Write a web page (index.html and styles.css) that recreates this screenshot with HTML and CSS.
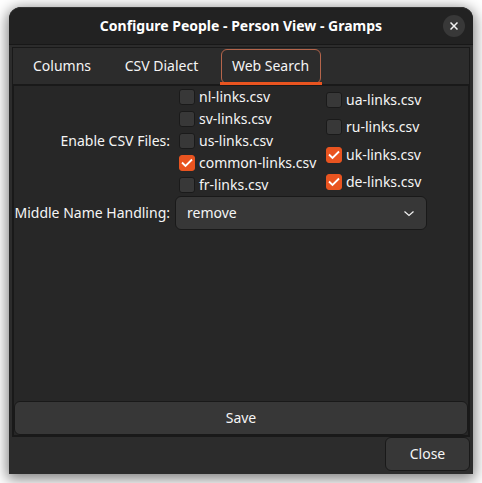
FILE: index.html
```html
<!DOCTYPE html>
<html lang="en">
<head>
<meta charset="utf-8">
<title>Configure People - Person View - Gramps</title>
<link rel="stylesheet" href="styles.css">
</head>
<body>
<main class="window">
  <header class="titlebar">
    <h1 class="title">Configure People - Person View - Gramps</h1>
    <button class="window-close" type="button" aria-label="Close window">
      <svg viewBox="0 0 8 8" width="8" height="8"><path d="M0.5 0.5 7.5 7.5M7.5 0.5 0.5 7.5"/></svg>
    </button>
  </header>
  <section class="notebook">
    <nav class="tabs" role="tablist">
      <button class="tab tab-short" type="button" role="tab">Columns</button>
      <button class="tab" type="button" role="tab">CSV Dialect</button>
      <button class="tab active" type="button" role="tab" aria-selected="true">Web Search</button>
    </nav>
    <form class="page">
      <div class="fields">
        <span class="field-label" id="files-label">Enable CSV Files:</span>
        <div class="files" role="group" aria-labelledby="files-label">
          <div class="file-list">
            <label class="file"><input type="checkbox">nl-links.csv</label>
            <label class="file"><input type="checkbox">sv-links.csv</label>
            <label class="file"><input type="checkbox">us-links.csv</label>
            <label class="file"><input type="checkbox" checked>common-links.csv</label>
            <label class="file"><input type="checkbox">fr-links.csv</label>
          </div>
          <div class="file-list">
            <label class="file"><input type="checkbox">ua-links.csv</label>
            <label class="file"><input type="checkbox">ru-links.csv</label>
            <label class="file"><input type="checkbox" checked>uk-links.csv</label>
            <label class="file"><input type="checkbox" checked>de-links.csv</label>
          </div>
        </div>
        <label class="field-label" for="middle-name">Middle Name Handling:</label>
        <div class="combo">
          <select id="middle-name"><option>remove</option></select>
          <svg class="chevron" viewBox="0 0 12 8" width="12" height="8"><path d="M1.5 1.5 6 5.5 10.5 1.5"/></svg>
        </div>
      </div>
      <button class="button save" type="button">Save</button>
    </form>
  </section>
  <footer class="actions">
    <button class="button close" type="button">Close</button>
  </footer>
</main>
</body>
</html>
```
FILE: styles.css
```css
* {
  box-sizing: border-box;
}

body {
  margin: 0;
  padding: 7px 9px 9px;
  min-height: 100vh;
  display: flex;
  background: #fff;
  color: #f5f5f5;
  font: 14px/22px "Noto Sans", "Open Sans", sans-serif;
}

button,
select {
  font: inherit;
  color: inherit;
}

svg {
  fill: none;
  stroke: #f2f2f2;
}

.window {
  flex: 1;
  display: flex;
  flex-direction: column;
  background: #2c2c2c;
  border-radius: 12px 12px 0 0;
  box-shadow: 0 3px 14px 2px rgba(0, 0, 0, 0.5);
}

.titlebar {
  position: relative;
  height: 38px;
  display: flex;
  align-items: center;
  justify-content: center;
  background: #222;
  border-top: 1px solid #343434;
  border-bottom: 1px solid #181818;
  border-radius: 12px 12px 0 0;
}

.title {
  margin: 0;
  font-size: 14px;
  font-weight: 700;
  color: #fff;
}

.window-close {
  position: absolute;
  right: 8px;
  width: 22px;
  height: 22px;
  padding: 0;
  display: flex;
  align-items: center;
  justify-content: center;
  border: 0;
  border-radius: 50%;
  background: #383838;
}

.window-close svg {
  stroke-width: 1.5;
}

.notebook {
  flex: 1;
  display: flex;
  flex-direction: column;
  margin: 2px 3px 0;
  border: 1px solid #191919;
}

.tabs {
  display: flex;
  gap: 8px;
  height: 38px;
  padding-left: 8px;
  border-bottom: 2px solid #191919;
}

.tab {
  position: relative;
  width: 101px;
  height: 36px;
  padding: 0;
  border: 0;
  background: none;
}

.tab-short {
  width: 82px;
}

.tab.active::before {
  content: "";
  position: absolute;
  inset: 1px 0 0 1px;
  border: 1px solid #b5654b;
  border-radius: 6px;
}

.tab.active::after {
  content: "";
  position: absolute;
  inset: 34px -1px -1px 0;
  background: #e95420;
}

.page {
  flex: 1;
  display: flex;
  flex-direction: column;
  justify-content: space-between;
  background: #272727;
  border: solid #191919;
  border-width: 0 1px 1px;
}

.fields {
  display: grid;
  grid-template-columns: 156px 252px;
  column-gap: 5px;
  align-items: center;
}

.field-label {
  text-align: right;
  white-space: nowrap;
}

.files {
  display: flex;
  height: 110px;
  padding-left: 4px;
}

.file-list {
  display: flex;
  flex-direction: column;
  width: 147px;
  flex-shrink: 0;
}

.file-list:last-child {
  width: 100px;
}

.file {
  flex: 1;
  display: flex;
  align-items: center;
  gap: 4px;
  white-space: nowrap;
}

.file input {
  appearance: none;
  width: 16px;
  height: 16px;
  margin: 0;
  border: 1px solid #1a1a1a;
  border-radius: 3px;
  background: #383838;
}

.file input:checked {
  border-color: #e95420;
  background: #e95420 url("data:image/svg+xml,%3Csvg xmlns='http://www.w3.org/2000/svg' viewBox='0 0 14 14'%3E%3Cpath d='M2 6.5 5.5 10 12 3.5' fill='none' stroke='white' stroke-width='1.8'/%3E%3C/svg%3E") center / 14px 14px;
}

.combo {
  position: relative;
  display: flex;
}

.combo select {
  appearance: none;
  width: 100%;
  height: 34px;
  padding: 0 11px;
  border: 1px solid #191919;
  border-radius: 6px;
  background: #373737;
}

.chevron {
  position: absolute;
  right: 12px;
  top: 14px;
  stroke-width: 1.2;
  pointer-events: none;
}

.button {
  height: 34px;
  padding: 0;
  border: 1px solid #191919;
  border-radius: 6px;
  background: #373737;
}

.actions {
  display: flex;
  justify-content: flex-end;
  padding: 0 3px 3px;
}

.close {
  width: 85px;
}
```
